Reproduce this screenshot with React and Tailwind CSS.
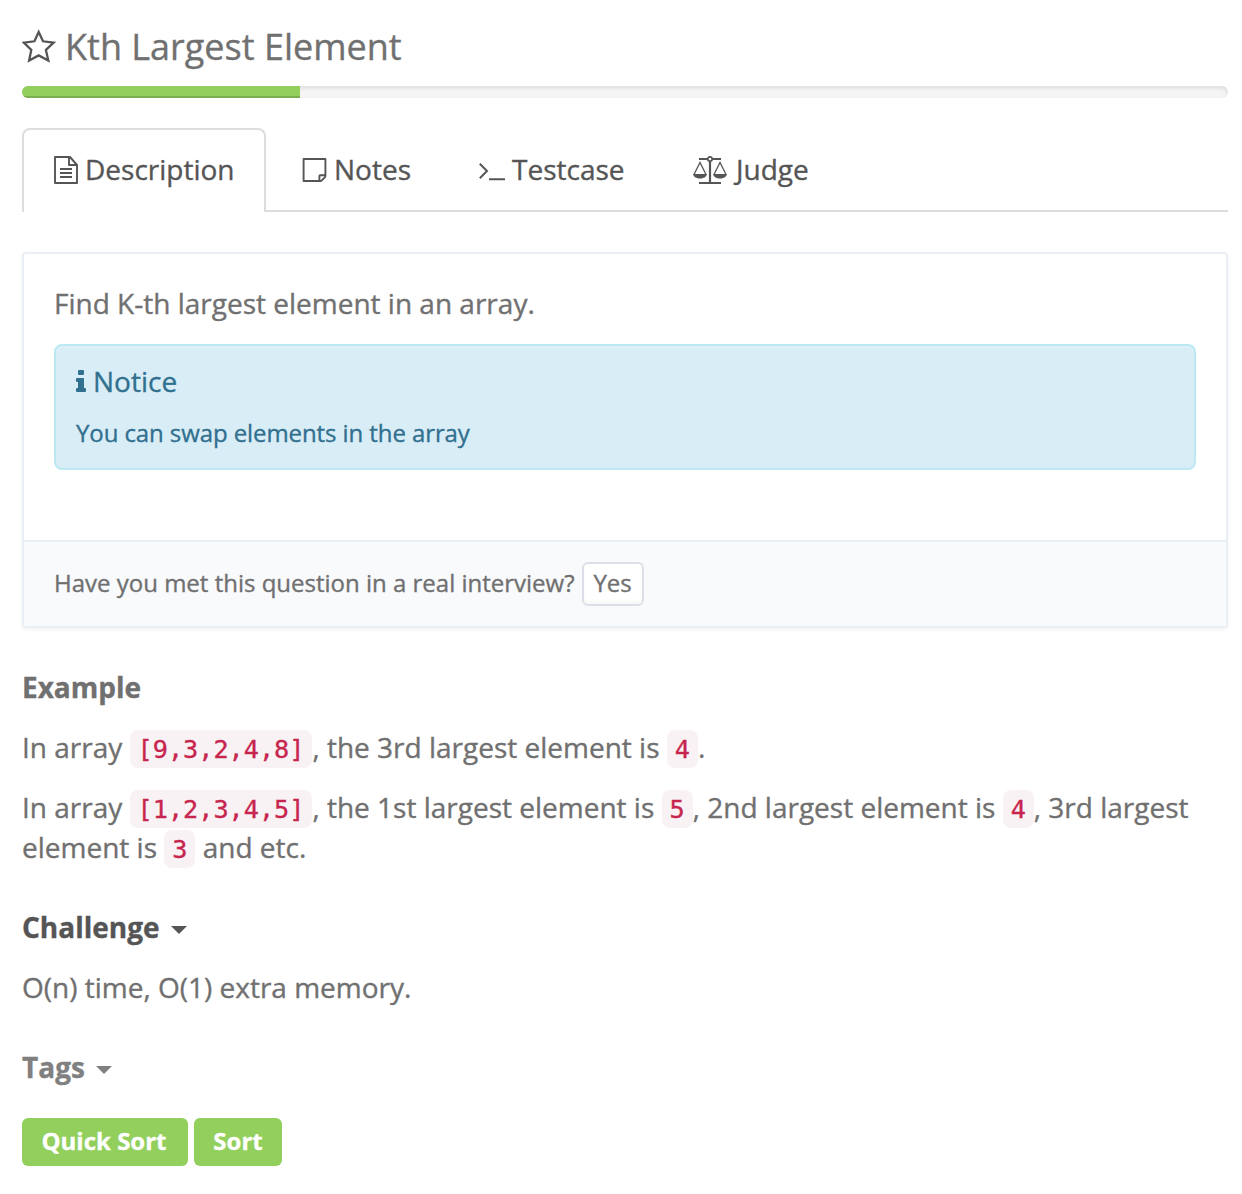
import React from "react";

function StarIcon() {
  return (
    <svg className="mb-[2px] block h-[34px] w-[34px] shrink-0" viewBox="0 0 34 34" fill="none" stroke="#555" strokeWidth="2.3">
      <path d="M16.700 3l4.300 9.300 10.600 1.400-7.700 7.200 2.400 10.600-9.600-5.100-9.600 5.100 2.200-10.600-7.500-7.200 10.600-1.400z" strokeLinejoin="miter" />
    </svg>
  );
}

function DocIcon() {
  return (
    <svg className="mb-[2px] block h-[28px] w-[24px] shrink-0" viewBox="0 0 24 28" fill="none" stroke="#555" strokeWidth="1.900">
      <path d="M1 1h15l7 8v18H1zM15 1v8h8" strokeLinejoin="round" />
      <path d="M6 13h12M6 17h12M6 21h12" />
    </svg>
  );
}

function NoteIcon() {
  return (
    <svg className="block h-[24px] w-[25px] shrink-0" viewBox="0 0 25 24" fill="none" stroke="#555" strokeWidth="1.900">
      <path d="M1.600 1h21.800v17q0 .8-.6 1.400l-3 3q-.6.6-1.400.6H1.600zM17.400 23v-5q0-.8.8-.8h5" strokeLinejoin="round" />
    </svg>
  );
}

function PromptIcon() {
  return (
    <svg className="mt-[2px] block h-[20px] w-[27px] shrink-0" viewBox="0 0 27 20" fill="none" stroke="#555" strokeWidth="2">
      <path d="M1.800 2.800l7.200 7.200-7.200 7.200M11 18.200h16" />
    </svg>
  );
}

function ScaleIcon() {
  return (
    <svg className="block h-[28px] w-[34px] shrink-0" viewBox="0 0 34 28" fill="none" stroke="#555">
      <path d="M6 3h8.500M19.500 3H28M6 27h22" strokeWidth="2" />
      <path d="M17 5.500V27" strokeWidth="2.200" />
      <circle cx="17" cy="3" r="2.200" strokeWidth="1.700" />
      <path d="M1 18.500L7 6.500l6 12M21 18.500l6-12 6 12" strokeWidth="1.300" />
      <path d="M0 18h14c-.6 3-3.500 4.500-7 4.500S.6 21 0 18zM20 18h14c-.6 3-3.500 4.500-7 4.500s-6.400-1.500-7-4.500z" fill="#555" stroke="none" />
    </svg>
  );
}

function InfoIcon() {
  return (
    <svg className="block h-[22px] w-[10px] shrink-0" viewBox="0 0 10 22" fill="#31708f">
      <rect x="2" y="0" width="6" height="5" rx="1" />
      <path d="M1 8h6.200q.8 0 .8.800V18h1q1 0 1 1v2q0 1-1 1H1q-1 0-1-1v-2q0-1 1-1h1v-6H1q-1 0-1-1V9q0-1 1-1z" />
    </svg>
  );
}

function Caret() {
  return <span className="mt-[5px] ml-[11px] h-0 w-0 border-x-8 border-t-8 border-x-transparent border-t-current" />;
}

function Code({ children }) {
  return (
    <code className="rounded-lg bg-[#f9f2f4] px-2 pt-[5px] pb-1 font-['DejaVu_Sans_Mono',monospace] text-[25.2px] leading-none text-[#c7254e]">
      {children}
    </code>
  );
}

export default function App() {
  return (
    <main className="flex h-[1194px] w-[1242px] flex-col bg-white pr-[14px] pl-[22px] font-['Open_Sans',sans-serif] text-[28px] leading-[40px] text-[#707070] [-webkit-text-stroke:0.35px_currentColor]">
      <h1 className="mt-[22px] flex h-[50px] items-center text-[36px] leading-[50px]">
        <StarIcon />
        <span className="ml-[9px]">Kth Largest Element</span>
      </h1>

      <div className="mt-[14px] h-3 shrink-0 overflow-hidden rounded-lg bg-[#f5f5f5] shadow-[inset_0_2px_4px_rgba(0,0,0,0.1)]">
        <div className="h-full w-[278px] bg-[#92cf5c] shadow-[inset_0_-2px_0_rgba(0,0,0,0.15)]" />
      </div>

      <nav className="mt-[30px] flex h-[84px] shrink-0 text-[#555]">
        <div className="flex w-[244px] items-center rounded-t-lg border-2 border-b-0 border-[#ddd] pl-[30px]">
          <DocIcon />
          <span className="mb-[4px] ml-[7px]">Description</span>
        </div>
        <div className="flex flex-1 items-center border-b-2 border-[#ddd] pt-[2px] pl-[36px]">
          <NoteIcon />
          <span className="mb-[2px] ml-[7px] w-[144px]">Notes</span>
          <PromptIcon />
          <span className="mb-[2px] ml-[7px] w-[181px]">Testcase</span>
          <ScaleIcon />
          <span className="mb-[2px] ml-[9px]">Judge</span>
        </div>
      </nav>

      <section className="mt-[40px] flex h-[376px] shrink-0 flex-col rounded-[4px] border-2 border-[#eaeef5] shadow-[0_2px_4px_rgba(0,0,0,0.05)]">
        <div className="flex-1 px-[30px] pt-[29px]">
          <p>Find K-th largest element in an array.</p>
          <div className="mt-[21px] h-[126px] rounded-lg border-2 border-[#bce8f1] bg-[#d9edf7] pt-[15px] pl-[20px] text-[#31708f] shadow-[inset_0_2px_0_rgba(255,255,255,0.2)]">
            <div className="flex items-center">
              <InfoIcon />
              <span className="ml-[7px]">Notice</span>
            </div>
            <p className="mt-[14px] text-[24px] leading-[36px] tracking-[-0.09px]">You can swap elements in the array</p>
          </div>
        </div>
        <footer className="flex h-[86px] items-center border-t-2 border-[#eaeef5] bg-[#f9fafc] pl-[30px] text-[24px]">
          <span className="mb-[2px]">Have you met this question in a real interview?</span>
          <button className="ml-[7px] h-[44px] w-[62px] rounded-md border-2 border-[#dcdfe8] bg-white pb-[2px] leading-[38px] shadow-[inset_0_-3px_3px_rgba(0,0,0,0.03)]">Yes</button>
        </footer>
      </section>

      <h2 className="mt-[39px] font-bold">Example</h2>
      <p className="mt-5">
        In array <Code>[9,3,2,4,8]</Code>, the 3rd largest element is <Code>4</Code>.
      </p>
      <p className="mt-5">
        In array <Code>[1,2,3,4,5]</Code>, the 1st largest element is <Code>5</Code>, 2nd largest element is <Code>4</Code>, 3rd largest element is <Code>3</Code> and etc.
      </p>
      <h2 className="mt-[40px] flex items-center font-bold text-[#555]">
        Challenge
        <Caret />
      </h2>
      <p className="mt-5">O(n) time, O(1) extra memory.</p>
      <h2 className="mt-[40px] flex items-center font-bold text-[#808080]">
        Tags
        <Caret />
      </h2>
      <div className="mt-[31px] flex gap-[6px] text-[24px] leading-[46px] font-bold text-white">
        <span className="h-[48px] w-[166px] rounded-md bg-[#92cf5c] pr-[2px] text-center">Quick Sort</span>
        <span className="h-[48px] w-[88px] rounded-md bg-[#92cf5c] text-center">Sort</span>
      </div>
    </main>
  );
}
